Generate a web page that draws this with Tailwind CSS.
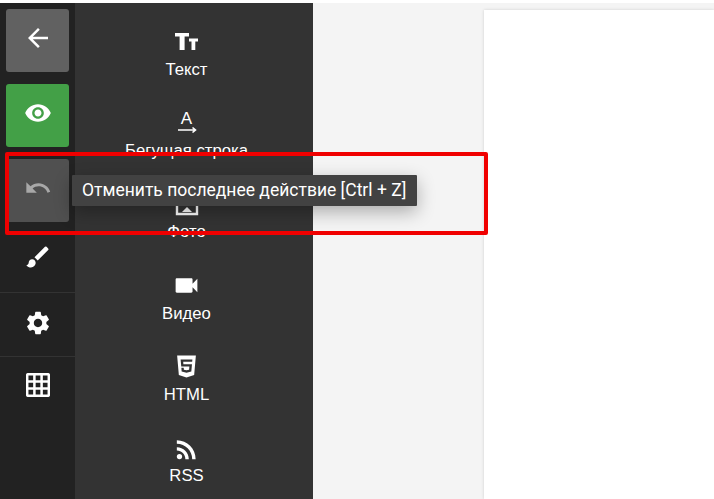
<!DOCTYPE html>
<html lang="ru">
<head>
    <meta charset="UTF-8">
    <title>Редактор</title>
    <script src="https://cdn.jsdelivr.net/npm/@tailwindcss/browser@4"></script>
</head>
<body class="bg-white overflow-hidden font-['Liberation_Sans',sans-serif]">
    <div class="relative w-[714px] h-[499px] pt-[3px] overflow-hidden">
        <div class="flex h-[496px]">
            <!-- Left rail -->
            <div class="w-[75px] bg-[#222222] flex flex-col shrink-0">
                <div class="px-[6px] pt-[6px] flex flex-col gap-3">
                    <button class="w-[63px] h-[63px] pb-[5px] rounded-[3px] bg-[#616161] flex items-center justify-center">
                        <svg class="w-[30px] h-[30px]" viewBox="0 0 24 24" fill="#fff"><path d="M20 11H7.83l5.59-5.59L12 4l-8 8 8 8 1.41-1.41L7.83 13H20v-2z"/></svg>
                    </button>
                    <button class="w-[63px] h-[63px] pb-[5px] rounded-[3px] bg-[#43a047] flex items-center justify-center">
                        <svg class="w-[28px] h-[28px]" viewBox="0 0 24 24" fill="#fff"><path d="M12 4.5C7 4.5 2.73 7.61 1 12c1.73 4.39 6 7.5 11 7.5s9.27-3.11 11-7.5c-1.73-4.39-6-7.5-11-7.5zM12 17c-2.76 0-5-2.24-5-5s2.24-5 5-5 5 2.24 5 5-2.24 5-5 5zm0-8c-1.66 0-3 1.34-3 3s1.34 3 3 3 3-1.34 3-3-1.34-3-3-3z"/></svg>
                    </button>
                    <button class="w-[63px] h-[63px] pb-[5px] rounded-[3px] bg-[#505050] flex items-center justify-center">
                        <svg class="w-[28px] h-[28px]" viewBox="0 0 24 24" fill="#a8a8a8"><path d="M12.5 8c-2.65 0-5.05.99-6.9 2.6L2 7v9h9l-3.62-3.62c1.39-1.16 3.16-1.88 5.12-1.88 3.54 0 6.55 2.31 7.6 5.5l2.37-.78C21.08 11.03 17.15 8 12.5 8z"/></svg>
                    </button>
                </div>
                <div class="h-[71px] border-b border-[#333333] flex items-center justify-center">
                    <svg class="w-[28px] h-[28px]" viewBox="0 0 24 24" fill="#fff"><path d="M7 14c-1.66 0-3 1.34-3 3 0 1.31-1.16 2-2 2 .92 1.22 2.49 2 4 2 2.21 0 4-1.79 4-4 0-1.66-1.34-3-3-3zm13.71-9.37l-1.34-1.34a.9959.9959 0 0 0-1.41 0L9 12.25 11.75 15l8.96-8.96c.39-.39.39-1.02 0-1.41z"/></svg>
                </div>
                <div class="h-[64px] pb-[3px] border-b border-[#333333] flex items-center justify-center">
                    <svg class="w-[28px] h-[28px]" viewBox="0 0 24 24" fill="#fff"><path d="M19.14 12.94c.04-.3.06-.61.06-.94 0-.32-.02-.64-.07-.94l2.03-1.58c.18-.14.23-.41.12-.61l-1.92-3.32c-.12-.22-.37-.29-.59-.22l-2.39.96c-.5-.38-1.03-.7-1.62-.94l-.36-2.54c-.04-.24-.24-.41-.48-.41h-3.84c-.24 0-.43.17-.47.41l-.36 2.54c-.59.24-1.13.57-1.62.94l-2.39-.96c-.22-.08-.47 0-.59.22L2.74 8.87c-.12.21-.08.47.12.61l2.03 1.58c-.05.3-.09.63-.09.94s.02.64.07.94l-2.03 1.58c-.18.14-.23.41-.12.61l1.92 3.32c.12.22.37.29.59.22l2.39-.96c.5.38 1.03.7 1.62.94l.36 2.54c.05.24.24.41.48.41h3.84c.24 0 .44-.17.47-.41l.36-2.54c.59-.24 1.13-.56 1.62-.94l2.39.96c.22.08.47 0 .59-.22l1.92-3.32c.12-.22.07-.47-.12-.61l-2.01-1.58zM12 15.6c-1.98 0-3.6-1.62-3.6-3.6s1.62-3.6 3.6-3.6 3.6 1.62 3.6 3.6-1.62 3.6-3.6 3.6z"/></svg>
                </div>
                <div class="h-[56px] flex items-center justify-center">
                    <svg class="w-[24px] h-[24px]" viewBox="0 0 24 24" fill="none" stroke="#fff" stroke-width="2.5"><rect x="1.2" y="1.2" width="21.6" height="21.6" rx="1"/><path d="M8.4 1v22M15.6 1v22M1 8.4h22M1 15.6h22"/></svg>
                </div>
            </div>

            <!-- Widgets panel -->
            <div class="w-[238px] bg-[#333333] shrink-0 pr-[15px] flex flex-col items-center text-white text-[16.7px] leading-[18px] overflow-hidden">
                <div class="h-[81px] shrink-0 flex flex-col items-center justify-end pb-[5px] w-full">
                    <svg class="w-[23px] h-[17px] mb-[11px]" viewBox="0 0 23 17" fill="#fff"><path d="M0 0h14v3.6h-4.4V17H4.6V3.6H0z"/><path d="M14 5.6h9v3h-2.7V17h-3.8V8.6H14z"/></svg>
                    <span>Текст</span>
                </div>
                <div class="h-[81px] shrink-0 flex flex-col items-center justify-end pb-[5px] w-full">
                    <div class="flex flex-col items-center mb-[8px]">
                        <span class="text-[17px] leading-[15px]">A</span>
                        <svg class="w-[20px] h-[8px]" viewBox="0 0 20 8" fill="none" stroke="#fff" stroke-width="1.6"><path d="M1 4h17M15.5 1.5L18.5 4l-3 2.5"/></svg>
                    </div>
                    <span>Бегущая строка</span>
                </div>
                <div class="h-[81px] shrink-0 flex flex-col items-center justify-end pb-[5px] w-full">
                    <svg class="w-[24px] h-[24px] mb-[7px]" viewBox="0 0 24 24" fill="#fff"><path d="M2 2h20v20H2z" fill="none" stroke="#fff" stroke-width="2.4"/><path d="M7 20l5-5 5 5z"/></svg>
                    <span>Фото</span>
                </div>
                <div class="h-[82px] shrink-0 flex flex-col items-center justify-end pb-[5px] w-full">
                    <svg class="w-[29px] h-[29px] mb-[5px]" viewBox="0 0 24 24" fill="#fff"><path d="M17 10.5V7c0-.55-.45-1-1-1H4c-.55 0-1 .45-1 1v10c0 .55.45 1 1 1h12c.55 0 1-.45 1-1v-3.5l4 4v-11l-4 4z"/></svg>
                    <span>Видео</span>
                </div>
                <div class="h-[81px] shrink-0 flex flex-col items-center justify-end pb-[5px] w-full">
                    <svg class="w-[19px] h-[25px] mb-[7px]" viewBox="0 0 384 512" fill="#fff"><path d="M0 32l34.9 395.8L191.5 480l157.6-52.2L384 32H0zm308.2 127.9H124.4l4.1 49.4h175.6l-13.6 148.4-97.9 27v.3h-1.1l-98.7-27.3-6-75.8h47.7L138 320l53.5 14.5 53.7-14.5 6-62.2H84.3L71.5 112.2h241.1l-4.4 47.7z"/></svg>
                    <span>HTML</span>
                </div>
                <div class="h-[81px] shrink-0 flex flex-col items-center justify-end pb-[5px] w-full">
                    <svg class="w-[29px] h-[29px] mb-[3px]" viewBox="0 0 24 24" fill="#fff"><circle cx="6.18" cy="17.82" r="2.18"/><path d="M4 4.44v2.83c7.03 0 12.73 5.7 12.73 12.73h2.83c0-8.59-6.97-15.56-15.56-15.56zm0 5.66v2.83c3.9 0 7.07 3.17 7.07 7.07h2.83c0-5.47-4.43-9.9-9.9-9.9z"/></svg>
                    <span>RSS</span>
                </div>
            </div>

            <!-- Workspace -->
            <div class="flex-1 bg-[#f4f4f4] pt-[7px] pl-[171px]">
                <div class="h-full bg-white shadow-[0_0_3px_rgba(0,0,0,0.15)]"></div>
            </div>
        </div>

        <!-- Tooltip -->
        <div class="absolute left-[72px] top-[175px] w-[345px] h-[31px] bg-[#424242] rounded-[1px] shadow-[0_6px_18px_rgba(0,0,0,0.3)] flex items-center pl-[10px] text-white text-[17.5px] whitespace-nowrap font-['Roboto',sans-serif]">Отменить последнее действие [Ctrl + Z]</div>

        <!-- Red highlight drawn on the screenshot -->
        <div class="absolute left-[5px] top-[152px] w-[483px] h-[83px] border-[4px] border-[#f00000] rounded-[2px]"></div>
    </div>
</body>
</html>
